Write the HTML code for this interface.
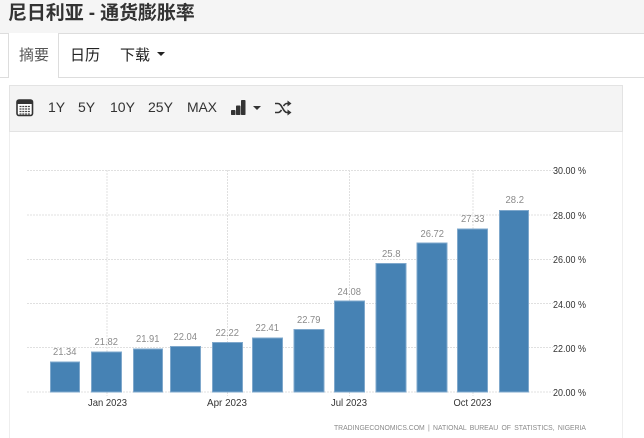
<!DOCTYPE html>
<html><head><meta charset="utf-8">
<style>
html,body{margin:0;padding:0;width:644px;height:438px;overflow:hidden;background:#fff;font-family:"Liberation Sans","Noto Sans CJK SC",sans-serif;color:#333}
.a{position:absolute}
#title{left:0;top:0;width:644px;height:33px;background:#f5f5f5;border-bottom:1px solid #ddd}
#title span{position:absolute;left:8px;top:1px;font-size:19px;line-height:26px;font-weight:bold;color:#333;white-space:nowrap;letter-spacing:-.1px}
.tab{font-size:15px;line-height:20px;top:45.500px;white-space:nowrap;color:#222}
.tb{font-size:14px;line-height:20px;top:97px;color:#333;white-space:nowrap}
</style></head><body>
<div class="a" id="title"><span>尼日利亚 - 通货膨胀率</span></div>
<div class="a" style="left:0;top:77px;width:644px;height:1px;background:#ddd"></div>
<div class="a" style="left:8px;top:33px;width:51px;height:45px;background:#fff;border-left:1px solid #ddd;border-right:1px solid #ddd;box-sizing:border-box"></div>
<div class="a tab" style="left:19px;color:#555">摘要</div>
<div class="a tab" style="left:70px">日历</div>
<div class="a tab" style="left:120px">下载</div>
<div class="a" style="left:157px;top:52px;border-left:4px solid transparent;border-right:4px solid transparent;border-top:4px solid #222"></div>
<div class="a" style="left:9px;top:131px;width:614px;height:307px;border-left:1px solid #eee;border-right:1px solid #eee;box-sizing:border-box"></div>
<div class="a" style="left:9px;top:85px;width:614px;height:47px;background:#f4f4f4;border:1px solid #e3e3e3;box-sizing:border-box"></div>
<svg class="a" style="left:16px;top:99px" width="19" height="18" viewBox="0 0 19 18">
<rect x="1" y="1" width="15.500" height="15.500" rx="2" fill="#fff" stroke="#333" stroke-width="1.600"/>
<rect x="1" y="1" width="15.500" height="4" fill="#333"/>
<path d="M3.500 7.500h10.500M3.500 10h10.500M3.500 12.500h10.500M3.500 15h10.500" stroke="#444" stroke-width="1.300" stroke-dasharray="2 .8"/>
</svg>
<div class="a tb" style="left:48px">1Y</div>
<div class="a tb" style="left:78px">5Y</div>
<div class="a tb" style="left:110px">10Y</div>
<div class="a tb" style="left:148px">25Y</div>
<div class="a tb" style="left:187px;letter-spacing:-.2px">MAX</div>
<svg class="a" style="left:230px;top:100px" width="35" height="16" viewBox="0 0 35 16">
<rect x="1" y="10" width="4.500" height="5" rx=".8" fill="#333"/><rect x="6" y="5.500" width="4.500" height="9.500" rx=".8" fill="#333"/><rect x="11" y="0" width="4.500" height="15" rx=".8" fill="#333"/>
<path d="M23 6h8l-4 4z" fill="#333"/>
</svg>
<svg class="a" style="left:274px;top:100px" width="18" height="16" viewBox="0 0 18 16" fill="none" stroke="#333" stroke-width="1.600">
<path d="M1 3.500h3c4 0 5 9 9 9h2M1 12.500h3c1.500 0 2.500-1 3.500-2.600M9.500 6.100C10.500 4.500 11.500 3.500 13 3.500h2"/>
<path d="M13.500 .5l4 3-4 3zM13.500 9.500l4 3-4 3z" fill="#333" stroke="none"/>
</svg>
<svg class="a" style="left:0;top:0" width="644" height="438" font-family="Liberation Sans, sans-serif" font-size="10.500">
<g stroke="#e0e0e0" stroke-width="1" stroke-dasharray="2 1" fill="none">
<path d="M27 170.500H553M27 215H553M27 259.500H553M27 303.500H553M27 347.500H553M27 392H553"/>
<path d="M107 170V396M227.500 170V396M349.500 170V396M473 170V396"/>
</g>
<g fill="#4682b4" stroke="#7fa8cc" stroke-width="1">
<rect x="50.500" y="362" width="29" height="30"/>
<rect x="91.500" y="352" width="30" height="40"/>
<rect x="133.500" y="349" width="29" height="43"/>
<rect x="170.500" y="346.500" width="30" height="45.500"/>
<rect x="212.500" y="342.500" width="30" height="49.500"/>
<rect x="252.500" y="338" width="30" height="54"/>
<rect x="294" y="329.500" width="30" height="62.500"/>
<rect x="334.500" y="301" width="30" height="91"/>
<rect x="376" y="263.500" width="30" height="128.500"/>
<rect x="417" y="243" width="30" height="149"/>
<rect x="457.500" y="229" width="30" height="163"/>
<rect x="499.500" y="210.500" width="29" height="181.500"/>
</g>
<g fill="#8a8a8a">
<text x="53" y="355" textLength="23.500" lengthAdjust="spacingAndGlyphs">21.34</text>
<text x="94.500" y="345" textLength="23.500" lengthAdjust="spacingAndGlyphs">21.82</text>
<text x="136" y="342" textLength="23.500" lengthAdjust="spacingAndGlyphs">21.91</text>
<text x="173.500" y="340" textLength="23.500" lengthAdjust="spacingAndGlyphs">22.04</text>
<text x="215.500" y="336" textLength="23.500" lengthAdjust="spacingAndGlyphs">22.22</text>
<text x="255.500" y="331" textLength="23.500" lengthAdjust="spacingAndGlyphs">22.41</text>
<text x="297" y="323" textLength="23.500" lengthAdjust="spacingAndGlyphs">22.79</text>
<text x="337.500" y="295" textLength="23.500" lengthAdjust="spacingAndGlyphs">24.08</text>
<text x="382" y="257" textLength="18.500" lengthAdjust="spacingAndGlyphs">25.8</text>
<text x="420.500" y="237" textLength="23.500" lengthAdjust="spacingAndGlyphs">26.72</text>
<text x="461" y="222" textLength="23.500" lengthAdjust="spacingAndGlyphs">27.33</text>
<text x="505.500" y="203" textLength="18.500" lengthAdjust="spacingAndGlyphs">28.2</text>
</g>
<g fill="#333">
<text x="88" y="406" textLength="39" lengthAdjust="spacingAndGlyphs">Jan 2023</text>
<text x="207" y="406" textLength="40" lengthAdjust="spacingAndGlyphs">Apr 2023</text>
<text x="331" y="406" textLength="36" lengthAdjust="spacingAndGlyphs">Jul 2023</text>
<text x="453.500" y="406" textLength="38" lengthAdjust="spacingAndGlyphs">Oct 2023</text>
</g>
<g fill="#333">
<text x="553" y="174" textLength="33" lengthAdjust="spacingAndGlyphs">30.00 %</text>
<text x="553" y="219" textLength="33" lengthAdjust="spacingAndGlyphs">28.00 %</text>
<text x="553" y="263" textLength="33" lengthAdjust="spacingAndGlyphs">26.00 %</text>
<text x="553" y="308" textLength="33" lengthAdjust="spacingAndGlyphs">24.00 %</text>
<text x="553" y="352" textLength="33" lengthAdjust="spacingAndGlyphs">22.00 %</text>
<text x="553" y="396" textLength="33" lengthAdjust="spacingAndGlyphs">20.00 %</text>
</g>
<text x="334" y="430" textLength="252" lengthAdjust="spacingAndGlyphs" font-size="7.500" fill="#8a8a8a" word-spacing="1.500">TRADINGECONOMICS.COM | NATIONAL BUREAU OF STATISTICS, NIGERIA</text>
</svg>
</body></html>
